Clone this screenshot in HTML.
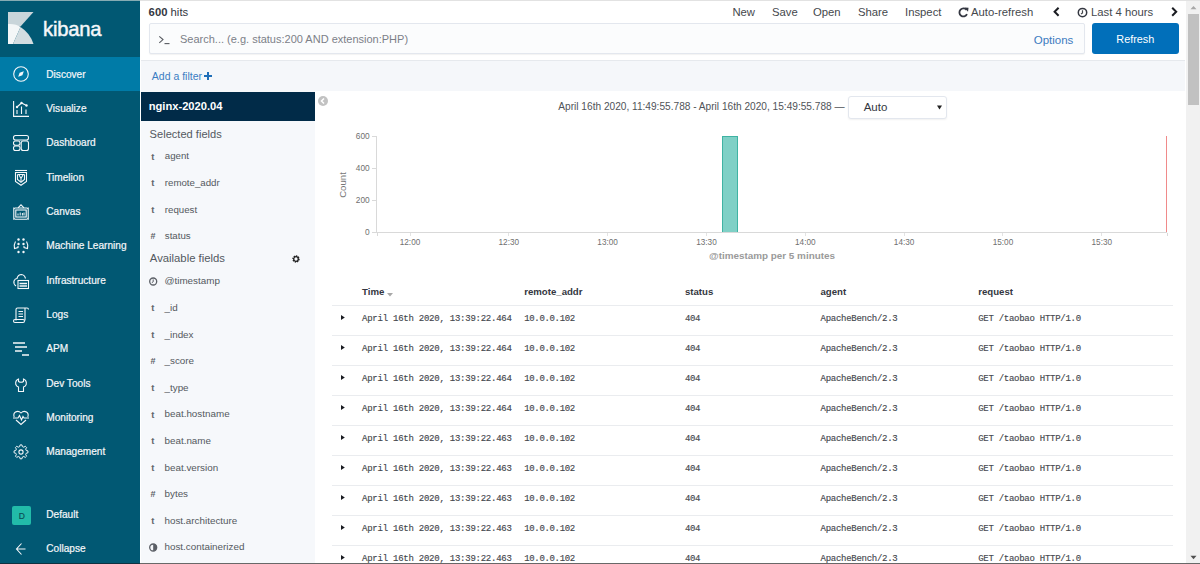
<!DOCTYPE html>
<html><head><meta charset="utf-8"><title>Discover - Kibana</title>
<style>
html,body{margin:0;padding:0;width:1200px;height:564px;overflow:hidden;background:#fff}
.r{position:absolute;display:block}
.t{position:absolute;white-space:nowrap;font-family:'Liberation Sans', sans-serif}
b{font-weight:700}
</style></head><body>
<div class="r" style="left:0px;top:0px;width:1200px;height:564px;background:#fff"></div>
<div class="r" style="left:0px;top:0px;width:1200px;height:1px;background:#e2e2e2"></div>
<div class="r" style="left:0px;top:0px;width:140px;height:1px;background:#86abb3"></div>
<div class="r" style="left:0px;top:1px;width:140px;height:562px;background:#015873"></div>
<div class="r" style="left:0px;top:57px;width:140px;height:34px;background:#007ba7"></div>
<svg class="r" style="left:8px;top:12px" width="26" height="33" viewBox="0 0 26 33">
<polygon points="0,0 25.5,0 12.5,14.5 0,14.5" fill="#c9d5da"/>
<path d="M0,12 Q8,11.5 12.5,15 L5,32 L0,32 Z" fill="#f4f7f8"/>
<path d="M12.5,15 Q22,21 25.5,32 L5,32 Z" fill="#d3dde1"/>
</svg>
<div class="t" style="left:43.00px;top:18.70px;font-size:20.2px;line-height:20.2px;color:#f5f7fa;font-weight:400;font-family:'Liberation Sans', sans-serif;letter-spacing:-0.2px;-webkit-text-stroke:0.45px #f5f7fa;">kibana</div>
<div class="t" style="left:46.30px;top:69.75px;font-size:10.1px;line-height:10.1px;color:#f5f7fa;font-weight:400;font-family:'Liberation Sans', sans-serif;-webkit-text-stroke:0.2px #f5f7fa;">Discover</div>
<svg class="r" style="left:13px;top:66px" width="16" height="16" viewBox="0 0 16 16" overflow="visible"><circle cx="8" cy="8" r="7.3" fill="none" stroke="#f5f7fa" stroke-width="1.1"/><path d="M10.8,5.2 L6.6,6.8 L5.2,10.8 L9.4,9.2 Z" fill="#f5f7fa"/></svg>
<div class="t" style="left:46.30px;top:104.09px;font-size:10.1px;line-height:10.1px;color:#f5f7fa;font-weight:400;font-family:'Liberation Sans', sans-serif;-webkit-text-stroke:0.2px #f5f7fa;">Visualize</div>
<svg class="r" style="left:13px;top:101px" width="16" height="16" viewBox="0 0 16 16" overflow="visible"><path d="M0.6,0 V15.4 H16" fill="none" stroke="#f5f7fa" stroke-width="1.1"/><path d="M4,6 L8.5,2 L13.5,4.5" fill="none" stroke="#f5f7fa" stroke-width="1.1"/><circle cx="4" cy="6" r="1.2" fill="#f5f7fa"/><circle cx="8.5" cy="2" r="1.2" fill="#f5f7fa"/><circle cx="13.5" cy="4.5" r="1.2" fill="#f5f7fa"/><path d="M4,9 V13 M8.5,5.5 V13 M13,8.5 V13" fill="none" stroke="#f5f7fa" stroke-width="1.1"/></svg>
<div class="t" style="left:46.30px;top:138.43px;font-size:10.1px;line-height:10.1px;color:#f5f7fa;font-weight:400;font-family:'Liberation Sans', sans-serif;-webkit-text-stroke:0.2px #f5f7fa;">Dashboard</div>
<svg class="r" style="left:13px;top:135px" width="16" height="16" viewBox="0 0 16 16" overflow="visible"><rect x="0.5" y="0.5" width="15" height="4.5" rx="2" fill="none" stroke="#f5f7fa" stroke-width="1.1"/><rect x="0.5" y="6" width="6.5" height="4.2" rx="2" fill="none" stroke="#f5f7fa" stroke-width="1.1"/><rect x="0.5" y="11" width="6.5" height="4.5" rx="2" fill="none" stroke="#f5f7fa" stroke-width="1.1"/><rect x="8.2" y="6" width="7.3" height="9.5" rx="2" fill="none" stroke="#f5f7fa" stroke-width="1.1"/></svg>
<div class="t" style="left:46.30px;top:172.77px;font-size:10.1px;line-height:10.1px;color:#f5f7fa;font-weight:400;font-family:'Liberation Sans', sans-serif;-webkit-text-stroke:0.2px #f5f7fa;">Timelion</div>
<svg class="r" style="left:13px;top:170px" width="16" height="16" viewBox="0 0 16 16" overflow="visible"><path d="M2,0.5 H14" fill="none" stroke="#f5f7fa" stroke-width="1.1"/><path d="M2.5,2.5 H13.5 V11.5 L8,15.3 L2.5,11.5 Z" fill="none" stroke="#f5f7fa" stroke-width="1.1"/><path d="M4.5,4.5 V9.5 L8,12.2 L11.5,9.5 V4.5 M4.5,4.5 H11.5" fill="none" stroke="#f5f7fa" stroke-width="1.1"/><path d="M6,5 L8,8.5 L10,5 M8,8.5 V11.5" fill="none" stroke="#f5f7fa" stroke-width="1.1"/></svg>
<div class="t" style="left:46.30px;top:207.11px;font-size:10.1px;line-height:10.1px;color:#f5f7fa;font-weight:400;font-family:'Liberation Sans', sans-serif;-webkit-text-stroke:0.2px #f5f7fa;">Canvas</div>
<svg class="r" style="left:13px;top:204px" width="16" height="16" viewBox="0 0 16 16" overflow="visible"><path d="M5,3.8 L8,0.8 L11,3.8" fill="none" stroke="#f5f7fa" stroke-width="1.1"/><path d="M0.8,4.2 Q1.5,4.6 2,4 H14 Q14.5,4.6 15.2,4.2 V15 Q14.5,14.5 14,15.2 H2 Q1.5,14.5 0.8,15 Z" fill="none" stroke="#f5f7fa" stroke-width="1.1"/><rect x="2.8" y="6" width="10.4" height="7" fill="none" stroke="#f5f7fa" stroke-width="1.1" stroke-width="1"/><path d="M5,9.5 V11.5 M7.2,8.5 V11.5 M9.4,9 V11.5 M11,8.5 V11.5" stroke="#f5f7fa" stroke-width="1"/></svg>
<div class="t" style="left:46.30px;top:241.45px;font-size:10.1px;line-height:10.1px;color:#f5f7fa;font-weight:400;font-family:'Liberation Sans', sans-serif;-webkit-text-stroke:0.2px #f5f7fa;">Machine Learning</div>
<svg class="r" style="left:13px;top:238px" width="16" height="16" viewBox="0 0 16 16" overflow="visible"><circle cx="5.5" cy="1.5" r="1.2" fill="#f5f7fa"/><circle cx="10.5" cy="1.5" r="1.2" fill="#f5f7fa"/><circle cx="5.5" cy="6" r="1.2" fill="#f5f7fa"/><circle cx="10.5" cy="6" r="1.2" fill="#f5f7fa"/><circle cx="5.5" cy="14" r="1.2" fill="#f5f7fa"/><circle cx="10.5" cy="14" r="1.2" fill="#f5f7fa"/><path d="M2.5,3.5 Q0.5,7 1.5,10.5 L5,9.5 V8 M13.5,3.5 Q15.5,7 14.5,10.5 L11,9.5 V8" fill="none" stroke="#f5f7fa" stroke-width="1.1"/></svg>
<div class="t" style="left:46.30px;top:275.79px;font-size:10.1px;line-height:10.1px;color:#f5f7fa;font-weight:400;font-family:'Liberation Sans', sans-serif;-webkit-text-stroke:0.2px #f5f7fa;">Infrastructure</div>
<svg class="r" style="left:13px;top:273px" width="16" height="16" viewBox="0 0 16 16" overflow="visible"><path d="M3,13 Q0.2,11 1,8 Q2,5.5 4,5.5 Q5,1.5 8.5,1.5 Q11.5,1.8 12.5,5.5" fill="none" stroke="#f5f7fa" stroke-width="1.1"/><rect x="5" y="7.5" width="10.5" height="8" fill="none" stroke="#f5f7fa" stroke-width="1.1"/><path d="M6.5,10.5 H14 M6.5,13 H14" stroke="#f5f7fa" stroke-width="1.4"/></svg>
<div class="t" style="left:46.30px;top:310.13px;font-size:10.1px;line-height:10.1px;color:#f5f7fa;font-weight:400;font-family:'Liberation Sans', sans-serif;-webkit-text-stroke:0.2px #f5f7fa;">Logs</div>
<svg class="r" style="left:13px;top:307px" width="16" height="16" viewBox="0 0 16 16" overflow="visible"><path d="M3,13.5 V2.5 Q3,1 4.5,1 H14 Q15.5,1 15.5,2.5 M12,13.5 V1.5" fill="none" stroke="#f5f7fa" stroke-width="1.1"/><path d="M5.5,4.5 H10 M5.5,7 H10 M5.5,9.5 H10" fill="none" stroke="#f5f7fa" stroke-width="1.1"/><rect x="0.5" y="12.5" width="11" height="3" rx="1.5" fill="none" stroke="#f5f7fa" stroke-width="1.1"/></svg>
<div class="t" style="left:46.30px;top:344.47px;font-size:10.1px;line-height:10.1px;color:#f5f7fa;font-weight:400;font-family:'Liberation Sans', sans-serif;-webkit-text-stroke:0.2px #f5f7fa;">APM</div>
<svg class="r" style="left:13px;top:341px" width="16" height="16" viewBox="0 0 16 16" overflow="visible"><path d="M0,2 H12 M2,6 H14 M2,10 H9 M9,14 H16" stroke="#f5f7fa" stroke-width="1.3"/></svg>
<div class="t" style="left:46.30px;top:378.81px;font-size:10.1px;line-height:10.1px;color:#f5f7fa;font-weight:400;font-family:'Liberation Sans', sans-serif;-webkit-text-stroke:0.2px #f5f7fa;">Dev Tools</div>
<svg class="r" style="left:13px;top:376px" width="16" height="16" viewBox="0 0 16 16" overflow="visible"><path d="M5.5,3 Q2,4.5 2.8,8.5 Q3.5,10.5 5.5,11 V15.5 H10.5 V11 Q12.5,10.5 13.2,8.5 Q14,4.5 10.5,3 V5.5 Q8,7 5.5,5.5 Z" fill="none" stroke="#f5f7fa" stroke-width="1.1"/></svg>
<div class="t" style="left:46.30px;top:413.15px;font-size:10.1px;line-height:10.1px;color:#f5f7fa;font-weight:400;font-family:'Liberation Sans', sans-serif;-webkit-text-stroke:0.2px #f5f7fa;">Monitoring</div>
<svg class="r" style="left:13px;top:410px" width="16" height="16" viewBox="0 0 16 16" overflow="visible"><path d="M3,10 L8,14.5 L13,10" fill="none" stroke="#f5f7fa" stroke-width="1.1"/><path d="M1.2,7 Q0,3.5 2.5,2 Q5.5,0.3 8,3 Q10.5,0.3 13.5,2 Q16,3.5 14.8,7" fill="none" stroke="#f5f7fa" stroke-width="1.1"/><path d="M0,8 H5 L6.5,5.5 L8.5,10 L10,6.5 L11,8 H16" fill="none" stroke="#f5f7fa" stroke-width="1.1"/></svg>
<div class="t" style="left:46.30px;top:447.49px;font-size:10.1px;line-height:10.1px;color:#f5f7fa;font-weight:400;font-family:'Liberation Sans', sans-serif;-webkit-text-stroke:0.2px #f5f7fa;">Management</div>
<svg class="r" style="left:13px;top:444px" width="16" height="16" viewBox="0 0 16 16" overflow="visible"><path d="M6.9,0.8 H9.1 L9.5,2.7 L11.2,3.4 L12.8,2.3 L14.3,3.8 L13.2,5.4 L13.9,7.1 L15.8,7.5 V9.7 L13.9,10.1 L13.2,11.8 L14.3,13.4 L12.8,14.9 L11.2,13.8 L9.5,14.5 L9.1,16.4 H6.9 L6.5,14.5 L4.8,13.8 L3.2,14.9 L1.7,13.4 L2.8,11.8 L2.1,10.1 L0.2,9.7 V7.5 L2.1,7.1 L2.8,5.4 L1.7,3.8 L3.2,2.3 L4.8,3.4 L6.5,2.7 Z" transform="translate(0.9,0.2) scale(0.89)" fill="none" stroke="#f5f7fa" stroke-width="1.1" stroke-width="1.2"/><circle cx="8" cy="8" r="2.1" fill="none" stroke="#f5f7fa" stroke-width="1.1"/></svg>
<div class="r" style="left:12px;top:506px;width:19px;height:19px;background:#22bba9;border-radius:2px"></div>
<div class="t" style="left:18.80px;top:512.00px;font-size:8.5px;line-height:8.5px;color:#0b4f55;font-weight:400;font-family:'Liberation Sans', sans-serif;-webkit-text-stroke:0.2px #0b4f55;">D</div>
<div class="t" style="left:46.30px;top:510.05px;font-size:10.1px;line-height:10.1px;color:#f5f7fa;font-weight:400;font-family:'Liberation Sans', sans-serif;-webkit-text-stroke:0.2px #f5f7fa;">Default</div>
<div class="t" style="left:46.30px;top:544.05px;font-size:10.1px;line-height:10.1px;color:#f5f7fa;font-weight:400;font-family:'Liberation Sans', sans-serif;-webkit-text-stroke:0.2px #f5f7fa;">Collapse</div>
<svg class="r" style="left:13px;top:540px" width="16" height="16" viewBox="0 0 16 16"><path d="M8.5,3.5 L3.5,9 L8.5,14.5 M3.5,9 H12.5" fill="none" stroke="#f5f7fa" stroke-width="1.1" stroke-width="1.3"/></svg>
<div class="t" style="left:148.60px;top:7.23px;font-size:11.3px;line-height:11.3px;color:#343741;font-weight:400;font-family:'Liberation Sans', sans-serif;"><b>600</b> hits</div>
<div class="t" style="left:732.40px;top:7.23px;font-size:11.3px;line-height:11.3px;color:#45484d;font-weight:400;font-family:'Liberation Sans', sans-serif;">New</div>
<div class="t" style="left:772.00px;top:7.23px;font-size:11.3px;line-height:11.3px;color:#45484d;font-weight:400;font-family:'Liberation Sans', sans-serif;">Save</div>
<div class="t" style="left:813.00px;top:7.23px;font-size:11.3px;line-height:11.3px;color:#45484d;font-weight:400;font-family:'Liberation Sans', sans-serif;">Open</div>
<div class="t" style="left:858.00px;top:7.23px;font-size:11.3px;line-height:11.3px;color:#45484d;font-weight:400;font-family:'Liberation Sans', sans-serif;">Share</div>
<div class="t" style="left:905.00px;top:7.23px;font-size:11.3px;line-height:11.3px;color:#45484d;font-weight:400;font-family:'Liberation Sans', sans-serif;">Inspect</div>
<div class="t" style="left:971.00px;top:7.23px;font-size:11.3px;line-height:11.3px;color:#45484d;font-weight:400;font-family:'Liberation Sans', sans-serif;">Auto-refresh</div>
<div class="t" style="left:1091.00px;top:7.23px;font-size:11.3px;line-height:11.3px;color:#45484d;font-weight:400;font-family:'Liberation Sans', sans-serif;">Last 4 hours</div>
<svg class="r" style="left:958px;top:7px" width="11" height="11" viewBox="0 0 11 11"><path d="M8.6,3 A4,4 0 1 0 9,7.2" fill="none" stroke="#343741" stroke-width="1.8"/><path d="M6.5,0.5 L10.5,0.8 L10,4.8 Z" fill="#343741"/></svg>
<svg class="r" style="left:1052px;top:7px" width="9" height="10" viewBox="0 0 9 10"><path d="M6.6,0.8 L2.6,4.8 L6.6,8.8" fill="none" stroke="#1a1c21" stroke-width="2"/></svg>
<svg class="r" style="left:1170px;top:7px" width="9" height="10" viewBox="0 0 9 10"><path d="M2.2,0.8 L6.2,4.8 L2.2,8.8" fill="none" stroke="#1a1c21" stroke-width="2"/></svg>
<svg class="r" style="left:1077px;top:7px" width="11" height="11" viewBox="0 0 11 11"><circle cx="5.5" cy="5.6" r="4.2" fill="none" stroke="#343741" stroke-width="1.5"/><path d="M5.5,3.2 V5.9 L4,6.9" fill="none" stroke="#45484d" stroke-width="1.2"/></svg>
<div class="r" style="left:149px;top:23px;width:934px;height:29px;background:#fbfcfd;border:1px solid #e3e7ee;border-radius:2px;box-shadow:0 1px 1px rgba(0,0,0,0.05)"></div>
<svg class="r" style="left:158px;top:35px" width="13" height="10" viewBox="0 0 13 10"><path d="M1.3,1.3 L5,4.6 L1.3,7.9" fill="none" stroke="#585b61" stroke-width="1.1"/><path d="M6.5,8.6 H11.5" stroke="#585b61" stroke-width="1.1"/></svg>
<div class="t" style="left:180.00px;top:33.69px;font-size:11px;line-height:11px;color:#7c8088;font-weight:400;font-family:'Liberation Sans', sans-serif;">Search... (e.g. status:200 AND extension:PHP)</div>
<div class="t" style="left:1033.70px;top:34.57px;font-size:11.5px;line-height:11.5px;color:#3b7bc0;font-weight:400;font-family:'Liberation Sans', sans-serif;">Options</div>
<div class="r" style="left:1092px;top:23px;width:87px;height:31px;background:#016fba;border-radius:3px"></div>
<div class="t" style="left:1116.30px;top:33.82px;font-size:10.85px;line-height:10.85px;color:#ffffff;font-weight:400;font-family:'Liberation Sans', sans-serif;">Refresh</div>
<div class="r" style="left:141px;top:60px;width:1044px;height:31px;background:#f5f7fa;border-top:1px solid #e6e9ed;box-sizing:border-box"></div>
<div class="t" style="left:151.80px;top:70.91px;font-size:10.5px;line-height:10.5px;color:#3b7dc2;font-weight:400;font-family:'Liberation Sans', sans-serif;">Add a filter</div>
<svg class="r" style="left:204px;top:72px" width="8" height="8" viewBox="0 0 8 8"><path d="M4,0 V8 M0,4 H8" stroke="#1f6fb8" stroke-width="2"/></svg>
<div class="r" style="left:141px;top:91px;width:174px;height:472px;background:#f6f8fb"></div>
<div class="r" style="left:140px;top:91px;width:1px;height:472px;background:#ffffff"></div>
<div class="r" style="left:141px;top:92px;width:174px;height:29px;background:#012b48"></div>
<div class="t" style="left:148.70px;top:100.75px;font-size:11.16px;line-height:11.16px;color:#ffffff;font-weight:700;font-family:'Liberation Sans', sans-serif;">nginx-2020.04</div>
<div class="t" style="left:149.60px;top:129.30px;font-size:11.1px;line-height:11.1px;color:#535860;font-weight:400;font-family:'Liberation Sans', sans-serif;">Selected fields</div>
<div class="t" style="left:149.80px;top:252.83px;font-size:11.3px;line-height:11.3px;color:#535860;font-weight:400;font-family:'Liberation Sans', sans-serif;">Available fields</div>
<svg class="r" style="left:292px;top:255px" width="8" height="8" viewBox="0 0 8 8"><circle cx="4" cy="4" r="2.9" fill="none" stroke="#222" stroke-width="1.6" stroke-dasharray="1.3 0.9"/><circle cx="4" cy="4" r="2.3" fill="none" stroke="#222" stroke-width="1.3"/></svg>
<div class="t" style="left:164.80px;top:151.49px;font-size:9.7px;line-height:9.7px;color:#54585e;font-weight:400;font-family:'Liberation Sans', sans-serif;">agent</div>
<div class="t" style="left:151.30px;top:151.66px;font-size:9.5px;line-height:9.5px;color:#63676d;font-weight:700;font-family:'Liberation Sans', sans-serif;">t</div>
<div class="t" style="left:164.80px;top:178.12px;font-size:9.7px;line-height:9.7px;color:#54585e;font-weight:400;font-family:'Liberation Sans', sans-serif;">remote_addr</div>
<div class="t" style="left:151.30px;top:178.29px;font-size:9.5px;line-height:9.5px;color:#63676d;font-weight:700;font-family:'Liberation Sans', sans-serif;">t</div>
<div class="t" style="left:164.80px;top:204.75px;font-size:9.7px;line-height:9.7px;color:#54585e;font-weight:400;font-family:'Liberation Sans', sans-serif;">request</div>
<div class="t" style="left:151.30px;top:204.92px;font-size:9.5px;line-height:9.5px;color:#63676d;font-weight:700;font-family:'Liberation Sans', sans-serif;">t</div>
<div class="t" style="left:164.80px;top:231.38px;font-size:9.7px;line-height:9.7px;color:#54585e;font-weight:400;font-family:'Liberation Sans', sans-serif;">status</div>
<div class="t" style="left:150.50px;top:231.97px;font-size:9px;line-height:9px;color:#5b5f66;font-weight:700;font-family:'Liberation Sans', sans-serif;">#</div>
<div class="t" style="left:164.50px;top:276.46px;font-size:9.85px;line-height:9.85px;color:#54585e;font-weight:400;font-family:'Liberation Sans', sans-serif;">@timestamp</div>
<svg class="r" style="left:149px;top:276.80px" width="9" height="9" viewBox="0 0 9 9"><circle cx="4.2" cy="4.5" r="3.5" fill="none" stroke="#5b5f66" stroke-width="1.3"/><path d="M4.2,2.4 V4.8 L2.8,5.7" fill="none" stroke="#5b5f66" stroke-width="1"/></svg>
<div class="t" style="left:164.50px;top:303.04px;font-size:9.85px;line-height:9.85px;color:#54585e;font-weight:400;font-family:'Liberation Sans', sans-serif;">_id</div>
<div class="t" style="left:151.30px;top:303.34px;font-size:9.5px;line-height:9.5px;color:#63676d;font-weight:700;font-family:'Liberation Sans', sans-serif;">t</div>
<div class="t" style="left:164.50px;top:329.62px;font-size:9.85px;line-height:9.85px;color:#54585e;font-weight:400;font-family:'Liberation Sans', sans-serif;">_index</div>
<div class="t" style="left:151.30px;top:329.92px;font-size:9.5px;line-height:9.5px;color:#63676d;font-weight:700;font-family:'Liberation Sans', sans-serif;">t</div>
<div class="t" style="left:164.50px;top:356.20px;font-size:9.85px;line-height:9.85px;color:#54585e;font-weight:400;font-family:'Liberation Sans', sans-serif;">_score</div>
<div class="t" style="left:150.50px;top:356.92px;font-size:9px;line-height:9px;color:#5b5f66;font-weight:700;font-family:'Liberation Sans', sans-serif;">#</div>
<div class="t" style="left:164.50px;top:382.78px;font-size:9.85px;line-height:9.85px;color:#54585e;font-weight:400;font-family:'Liberation Sans', sans-serif;">_type</div>
<div class="t" style="left:151.30px;top:383.08px;font-size:9.5px;line-height:9.5px;color:#63676d;font-weight:700;font-family:'Liberation Sans', sans-serif;">t</div>
<div class="t" style="left:164.50px;top:409.36px;font-size:9.85px;line-height:9.85px;color:#54585e;font-weight:400;font-family:'Liberation Sans', sans-serif;">beat.hostname</div>
<div class="t" style="left:151.30px;top:409.66px;font-size:9.5px;line-height:9.5px;color:#63676d;font-weight:700;font-family:'Liberation Sans', sans-serif;">t</div>
<div class="t" style="left:164.50px;top:435.94px;font-size:9.85px;line-height:9.85px;color:#54585e;font-weight:400;font-family:'Liberation Sans', sans-serif;">beat.name</div>
<div class="t" style="left:151.30px;top:436.24px;font-size:9.5px;line-height:9.5px;color:#63676d;font-weight:700;font-family:'Liberation Sans', sans-serif;">t</div>
<div class="t" style="left:164.50px;top:462.52px;font-size:9.85px;line-height:9.85px;color:#54585e;font-weight:400;font-family:'Liberation Sans', sans-serif;">beat.version</div>
<div class="t" style="left:151.30px;top:462.82px;font-size:9.5px;line-height:9.5px;color:#63676d;font-weight:700;font-family:'Liberation Sans', sans-serif;">t</div>
<div class="t" style="left:164.50px;top:489.10px;font-size:9.85px;line-height:9.85px;color:#54585e;font-weight:400;font-family:'Liberation Sans', sans-serif;">bytes</div>
<div class="t" style="left:150.50px;top:489.82px;font-size:9px;line-height:9px;color:#5b5f66;font-weight:700;font-family:'Liberation Sans', sans-serif;">#</div>
<div class="t" style="left:164.50px;top:515.68px;font-size:9.85px;line-height:9.85px;color:#54585e;font-weight:400;font-family:'Liberation Sans', sans-serif;">host.architecture</div>
<div class="t" style="left:151.30px;top:515.98px;font-size:9.5px;line-height:9.5px;color:#63676d;font-weight:700;font-family:'Liberation Sans', sans-serif;">t</div>
<div class="t" style="left:164.50px;top:542.26px;font-size:9.85px;line-height:9.85px;color:#54585e;font-weight:400;font-family:'Liberation Sans', sans-serif;">host.containerized</div>
<svg class="r" style="left:149px;top:542.60px" width="9" height="9" viewBox="0 0 9 9"><circle cx="4.2" cy="4.5" r="3.5" fill="none" stroke="#5b5f66" stroke-width="1.3"/><path d="M4.2,1 A3.5,3.5 0 0 1 4.2,8 Z" fill="#5b5f66"/></svg>
<svg class="r" style="left:318px;top:96px" width="10" height="10" viewBox="0 0 10 10"><circle cx="5" cy="5" r="5" fill="#c2c2c2"/><path d="M6,2.5 L3.5,5 L6,7.5" fill="none" stroke="#fff" stroke-width="1.5"/></svg>
<div class="t" style="left:558.30px;top:102.22px;font-size:10.13px;line-height:10.13px;color:#505358;font-weight:400;font-family:'Liberation Sans', sans-serif;">April 16th 2020, 11:49:55.788 - April 16th 2020, 15:49:55.788 —</div>
<div class="r" style="left:848px;top:96px;width:99px;height:23px;background:#fff;border:1px solid #e3e7ee;border-radius:3px;box-sizing:border-box;box-shadow:0 1px 2px rgba(0,0,0,0.06)"></div>
<div class="t" style="left:863.70px;top:101.99px;font-size:11.47px;line-height:11.47px;color:#343741;font-weight:400;font-family:'Liberation Sans', sans-serif;">Auto</div>
<svg class="r" style="left:937px;top:105px" width="5" height="5" viewBox="0 0 5 5"><path d="M0,0.5 H5 L2.5,4.5 Z" fill="#222"/></svg>
<div class="r" style="left:376px;top:136px;width:1px;height:97px;background:#d9d9d9"></div>
<div class="r" style="left:376px;top:232px;width:791px;height:1px;background:#d9d9d9"></div>
<div class="r" style="left:372px;top:136px;width:4px;height:1px;background:#d9d9d9"></div>
<div class="t" style="right:830.4px;top:131.97px;font-size:8.3px;line-height:8.3px;color:#6f6f6f;font-family:'Liberation Sans', sans-serif">600</div>
<div class="r" style="left:372px;top:168px;width:4px;height:1px;background:#d9d9d9"></div>
<div class="t" style="right:830.4px;top:163.97px;font-size:8.3px;line-height:8.3px;color:#6f6f6f;font-family:'Liberation Sans', sans-serif">400</div>
<div class="r" style="left:372px;top:200px;width:4px;height:1px;background:#d9d9d9"></div>
<div class="t" style="right:830.4px;top:195.97px;font-size:8.3px;line-height:8.3px;color:#6f6f6f;font-family:'Liberation Sans', sans-serif">200</div>
<div class="r" style="left:372px;top:232px;width:4px;height:1px;background:#d9d9d9"></div>
<div class="t" style="right:830.4px;top:227.97px;font-size:8.3px;line-height:8.3px;color:#6f6f6f;font-family:'Liberation Sans', sans-serif">0</div>
<div class="t" style="left:342.6px;top:184.5px;font-size:9.6px;line-height:10px;color:#777;font-family:'Liberation Sans', sans-serif;transform:translate(-50%,-50%) rotate(-90deg);transform-origin:50% 50%">Count</div>
<div class="r" style="left:410px;top:233px;width:1px;height:3px;background:#e3e3e3"></div>
<div class="t" style="left:390.00px;width:40px;text-align:center;top:239.23px;font-size:8.23px;line-height:8.23px;color:#6f6f6f;font-family:'Liberation Sans', sans-serif">12:00</div>
<div class="r" style="left:508px;top:233px;width:1px;height:3px;background:#e3e3e3"></div>
<div class="t" style="left:488.83px;width:40px;text-align:center;top:239.23px;font-size:8.23px;line-height:8.23px;color:#6f6f6f;font-family:'Liberation Sans', sans-serif">12:30</div>
<div class="r" style="left:607px;top:233px;width:1px;height:3px;background:#e3e3e3"></div>
<div class="t" style="left:587.66px;width:40px;text-align:center;top:239.23px;font-size:8.23px;line-height:8.23px;color:#6f6f6f;font-family:'Liberation Sans', sans-serif">13:00</div>
<div class="r" style="left:706px;top:233px;width:1px;height:3px;background:#e3e3e3"></div>
<div class="t" style="left:686.49px;width:40px;text-align:center;top:239.23px;font-size:8.23px;line-height:8.23px;color:#6f6f6f;font-family:'Liberation Sans', sans-serif">13:30</div>
<div class="r" style="left:805px;top:233px;width:1px;height:3px;background:#e3e3e3"></div>
<div class="t" style="left:785.32px;width:40px;text-align:center;top:239.23px;font-size:8.23px;line-height:8.23px;color:#6f6f6f;font-family:'Liberation Sans', sans-serif">14:00</div>
<div class="r" style="left:904px;top:233px;width:1px;height:3px;background:#e3e3e3"></div>
<div class="t" style="left:884.15px;width:40px;text-align:center;top:239.23px;font-size:8.23px;line-height:8.23px;color:#6f6f6f;font-family:'Liberation Sans', sans-serif">14:30</div>
<div class="r" style="left:1002px;top:233px;width:1px;height:3px;background:#e3e3e3"></div>
<div class="t" style="left:982.98px;width:40px;text-align:center;top:239.23px;font-size:8.23px;line-height:8.23px;color:#6f6f6f;font-family:'Liberation Sans', sans-serif">15:00</div>
<div class="r" style="left:1101px;top:233px;width:1px;height:3px;background:#e3e3e3"></div>
<div class="t" style="left:1081.81px;width:40px;text-align:center;top:239.23px;font-size:8.23px;line-height:8.23px;color:#6f6f6f;font-family:'Liberation Sans', sans-serif">15:30</div>
<div class="r" style="left:377px;top:233px;width:1px;height:3px;background:#d9d9d9"></div>
<div class="r" style="left:1167px;top:233px;width:1px;height:3px;background:#d9d9d9"></div>
<div class="r" style="left:722px;top:136px;width:16px;height:96px;background:#7fd0c6;border:1px solid #3fb3a3;box-sizing:border-box;border-bottom:none"></div>
<div class="r" style="left:1166px;top:136px;width:1px;height:96px;background:#f08a8a"></div>
<div class="t" style="left:709.00px;top:251.37px;font-size:9.9px;line-height:9.9px;color:#9a9a9a;font-weight:700;font-family:'Liberation Sans', sans-serif;">@timestamp per 5 minutes</div>
<div class="t" style="left:362.00px;top:287.33px;font-size:9.65px;line-height:9.65px;color:#343741;font-weight:700;font-family:'Liberation Sans', sans-serif;">Time</div>
<div class="t" style="left:524.20px;top:287.33px;font-size:9.65px;line-height:9.65px;color:#343741;font-weight:700;font-family:'Liberation Sans', sans-serif;">remote_addr</div>
<div class="t" style="left:684.90px;top:287.33px;font-size:9.65px;line-height:9.65px;color:#343741;font-weight:700;font-family:'Liberation Sans', sans-serif;">status</div>
<div class="t" style="left:820.50px;top:287.33px;font-size:9.65px;line-height:9.65px;color:#343741;font-weight:700;font-family:'Liberation Sans', sans-serif;">agent</div>
<div class="t" style="left:978.20px;top:287.33px;font-size:9.65px;line-height:9.65px;color:#343741;font-weight:700;font-family:'Liberation Sans', sans-serif;">request</div>
<svg class="r" style="left:387px;top:293px" width="6" height="4" viewBox="0 0 6 4"><path d="M0,0 H6 L3,3.5 Z" fill="#a8a8a8"/></svg>
<div class="r" style="left:332px;top:305px;width:841px;height:1px;background:#eaecef"></div>
<div class="r" style="left:332px;top:335px;width:841px;height:1px;background:#eaecef"></div>
<div class="r" style="left:332px;top:365px;width:841px;height:1px;background:#eaecef"></div>
<div class="r" style="left:332px;top:395px;width:841px;height:1px;background:#eaecef"></div>
<div class="r" style="left:332px;top:425px;width:841px;height:1px;background:#eaecef"></div>
<div class="r" style="left:332px;top:455px;width:841px;height:1px;background:#eaecef"></div>
<div class="r" style="left:332px;top:485px;width:841px;height:1px;background:#eaecef"></div>
<div class="r" style="left:332px;top:515px;width:841px;height:1px;background:#eaecef"></div>
<div class="r" style="left:332px;top:545px;width:841px;height:1px;background:#eaecef"></div>
<svg class="r" style="left:341px;top:315px;transform:translateY(0px)" width="4" height="5" viewBox="0 0 4 5"><path d="M0,0 L3.8,2.5 L0,5 Z" fill="#1a1c21"/></svg>
<div class="t" style="left:362.00px;top:314.61px;font-size:9px;line-height:9px;color:#45484e;font-weight:400;font-family:'Liberation Mono', monospace;-webkit-text-stroke:0.15px #45484e;letter-spacing:-0.24px;">April 16th 2020, 13:39:22.464</div>
<div class="t" style="left:524.20px;top:314.61px;font-size:9px;line-height:9px;color:#45484e;font-weight:400;font-family:'Liberation Mono', monospace;-webkit-text-stroke:0.15px #45484e;letter-spacing:-0.33px;">10.0.0.102</div>
<div class="t" style="left:684.90px;top:314.61px;font-size:9px;line-height:9px;color:#45484e;font-weight:400;font-family:'Liberation Mono', monospace;-webkit-text-stroke:0.15px #45484e;letter-spacing:-0.33px;">404</div>
<div class="t" style="left:820.50px;top:314.61px;font-size:9px;line-height:9px;color:#45484e;font-weight:400;font-family:'Liberation Mono', monospace;-webkit-text-stroke:0.15px #45484e;letter-spacing:-0.27px;">ApacheBench/2.3</div>
<div class="t" style="left:978.20px;top:314.61px;font-size:9px;line-height:9px;color:#45484e;font-weight:400;font-family:'Liberation Mono', monospace;-webkit-text-stroke:0.15px #45484e;letter-spacing:-0.27px;">GET /taobao HTTP/1.0</div>
<svg class="r" style="left:341px;top:315px;transform:translateY(30px)" width="4" height="5" viewBox="0 0 4 5"><path d="M0,0 L3.8,2.5 L0,5 Z" fill="#1a1c21"/></svg>
<div class="t" style="left:362.00px;top:344.61px;font-size:9px;line-height:9px;color:#45484e;font-weight:400;font-family:'Liberation Mono', monospace;-webkit-text-stroke:0.15px #45484e;letter-spacing:-0.24px;">April 16th 2020, 13:39:22.464</div>
<div class="t" style="left:524.20px;top:344.61px;font-size:9px;line-height:9px;color:#45484e;font-weight:400;font-family:'Liberation Mono', monospace;-webkit-text-stroke:0.15px #45484e;letter-spacing:-0.33px;">10.0.0.102</div>
<div class="t" style="left:684.90px;top:344.61px;font-size:9px;line-height:9px;color:#45484e;font-weight:400;font-family:'Liberation Mono', monospace;-webkit-text-stroke:0.15px #45484e;letter-spacing:-0.33px;">404</div>
<div class="t" style="left:820.50px;top:344.61px;font-size:9px;line-height:9px;color:#45484e;font-weight:400;font-family:'Liberation Mono', monospace;-webkit-text-stroke:0.15px #45484e;letter-spacing:-0.27px;">ApacheBench/2.3</div>
<div class="t" style="left:978.20px;top:344.61px;font-size:9px;line-height:9px;color:#45484e;font-weight:400;font-family:'Liberation Mono', monospace;-webkit-text-stroke:0.15px #45484e;letter-spacing:-0.27px;">GET /taobao HTTP/1.0</div>
<svg class="r" style="left:341px;top:315px;transform:translateY(60px)" width="4" height="5" viewBox="0 0 4 5"><path d="M0,0 L3.8,2.5 L0,5 Z" fill="#1a1c21"/></svg>
<div class="t" style="left:362.00px;top:374.61px;font-size:9px;line-height:9px;color:#45484e;font-weight:400;font-family:'Liberation Mono', monospace;-webkit-text-stroke:0.15px #45484e;letter-spacing:-0.24px;">April 16th 2020, 13:39:22.464</div>
<div class="t" style="left:524.20px;top:374.61px;font-size:9px;line-height:9px;color:#45484e;font-weight:400;font-family:'Liberation Mono', monospace;-webkit-text-stroke:0.15px #45484e;letter-spacing:-0.33px;">10.0.0.102</div>
<div class="t" style="left:684.90px;top:374.61px;font-size:9px;line-height:9px;color:#45484e;font-weight:400;font-family:'Liberation Mono', monospace;-webkit-text-stroke:0.15px #45484e;letter-spacing:-0.33px;">404</div>
<div class="t" style="left:820.50px;top:374.61px;font-size:9px;line-height:9px;color:#45484e;font-weight:400;font-family:'Liberation Mono', monospace;-webkit-text-stroke:0.15px #45484e;letter-spacing:-0.27px;">ApacheBench/2.3</div>
<div class="t" style="left:978.20px;top:374.61px;font-size:9px;line-height:9px;color:#45484e;font-weight:400;font-family:'Liberation Mono', monospace;-webkit-text-stroke:0.15px #45484e;letter-spacing:-0.27px;">GET /taobao HTTP/1.0</div>
<svg class="r" style="left:341px;top:315px;transform:translateY(90px)" width="4" height="5" viewBox="0 0 4 5"><path d="M0,0 L3.8,2.5 L0,5 Z" fill="#1a1c21"/></svg>
<div class="t" style="left:362.00px;top:404.61px;font-size:9px;line-height:9px;color:#45484e;font-weight:400;font-family:'Liberation Mono', monospace;-webkit-text-stroke:0.15px #45484e;letter-spacing:-0.24px;">April 16th 2020, 13:39:22.464</div>
<div class="t" style="left:524.20px;top:404.61px;font-size:9px;line-height:9px;color:#45484e;font-weight:400;font-family:'Liberation Mono', monospace;-webkit-text-stroke:0.15px #45484e;letter-spacing:-0.33px;">10.0.0.102</div>
<div class="t" style="left:684.90px;top:404.61px;font-size:9px;line-height:9px;color:#45484e;font-weight:400;font-family:'Liberation Mono', monospace;-webkit-text-stroke:0.15px #45484e;letter-spacing:-0.33px;">404</div>
<div class="t" style="left:820.50px;top:404.61px;font-size:9px;line-height:9px;color:#45484e;font-weight:400;font-family:'Liberation Mono', monospace;-webkit-text-stroke:0.15px #45484e;letter-spacing:-0.27px;">ApacheBench/2.3</div>
<div class="t" style="left:978.20px;top:404.61px;font-size:9px;line-height:9px;color:#45484e;font-weight:400;font-family:'Liberation Mono', monospace;-webkit-text-stroke:0.15px #45484e;letter-spacing:-0.27px;">GET /taobao HTTP/1.0</div>
<svg class="r" style="left:341px;top:315px;transform:translateY(120px)" width="4" height="5" viewBox="0 0 4 5"><path d="M0,0 L3.8,2.5 L0,5 Z" fill="#1a1c21"/></svg>
<div class="t" style="left:362.00px;top:434.61px;font-size:9px;line-height:9px;color:#45484e;font-weight:400;font-family:'Liberation Mono', monospace;-webkit-text-stroke:0.15px #45484e;letter-spacing:-0.24px;">April 16th 2020, 13:39:22.463</div>
<div class="t" style="left:524.20px;top:434.61px;font-size:9px;line-height:9px;color:#45484e;font-weight:400;font-family:'Liberation Mono', monospace;-webkit-text-stroke:0.15px #45484e;letter-spacing:-0.33px;">10.0.0.102</div>
<div class="t" style="left:684.90px;top:434.61px;font-size:9px;line-height:9px;color:#45484e;font-weight:400;font-family:'Liberation Mono', monospace;-webkit-text-stroke:0.15px #45484e;letter-spacing:-0.33px;">404</div>
<div class="t" style="left:820.50px;top:434.61px;font-size:9px;line-height:9px;color:#45484e;font-weight:400;font-family:'Liberation Mono', monospace;-webkit-text-stroke:0.15px #45484e;letter-spacing:-0.27px;">ApacheBench/2.3</div>
<div class="t" style="left:978.20px;top:434.61px;font-size:9px;line-height:9px;color:#45484e;font-weight:400;font-family:'Liberation Mono', monospace;-webkit-text-stroke:0.15px #45484e;letter-spacing:-0.27px;">GET /taobao HTTP/1.0</div>
<svg class="r" style="left:341px;top:315px;transform:translateY(150px)" width="4" height="5" viewBox="0 0 4 5"><path d="M0,0 L3.8,2.5 L0,5 Z" fill="#1a1c21"/></svg>
<div class="t" style="left:362.00px;top:464.61px;font-size:9px;line-height:9px;color:#45484e;font-weight:400;font-family:'Liberation Mono', monospace;-webkit-text-stroke:0.15px #45484e;letter-spacing:-0.24px;">April 16th 2020, 13:39:22.463</div>
<div class="t" style="left:524.20px;top:464.61px;font-size:9px;line-height:9px;color:#45484e;font-weight:400;font-family:'Liberation Mono', monospace;-webkit-text-stroke:0.15px #45484e;letter-spacing:-0.33px;">10.0.0.102</div>
<div class="t" style="left:684.90px;top:464.61px;font-size:9px;line-height:9px;color:#45484e;font-weight:400;font-family:'Liberation Mono', monospace;-webkit-text-stroke:0.15px #45484e;letter-spacing:-0.33px;">404</div>
<div class="t" style="left:820.50px;top:464.61px;font-size:9px;line-height:9px;color:#45484e;font-weight:400;font-family:'Liberation Mono', monospace;-webkit-text-stroke:0.15px #45484e;letter-spacing:-0.27px;">ApacheBench/2.3</div>
<div class="t" style="left:978.20px;top:464.61px;font-size:9px;line-height:9px;color:#45484e;font-weight:400;font-family:'Liberation Mono', monospace;-webkit-text-stroke:0.15px #45484e;letter-spacing:-0.27px;">GET /taobao HTTP/1.0</div>
<svg class="r" style="left:341px;top:315px;transform:translateY(180px)" width="4" height="5" viewBox="0 0 4 5"><path d="M0,0 L3.8,2.5 L0,5 Z" fill="#1a1c21"/></svg>
<div class="t" style="left:362.00px;top:494.61px;font-size:9px;line-height:9px;color:#45484e;font-weight:400;font-family:'Liberation Mono', monospace;-webkit-text-stroke:0.15px #45484e;letter-spacing:-0.24px;">April 16th 2020, 13:39:22.463</div>
<div class="t" style="left:524.20px;top:494.61px;font-size:9px;line-height:9px;color:#45484e;font-weight:400;font-family:'Liberation Mono', monospace;-webkit-text-stroke:0.15px #45484e;letter-spacing:-0.33px;">10.0.0.102</div>
<div class="t" style="left:684.90px;top:494.61px;font-size:9px;line-height:9px;color:#45484e;font-weight:400;font-family:'Liberation Mono', monospace;-webkit-text-stroke:0.15px #45484e;letter-spacing:-0.33px;">404</div>
<div class="t" style="left:820.50px;top:494.61px;font-size:9px;line-height:9px;color:#45484e;font-weight:400;font-family:'Liberation Mono', monospace;-webkit-text-stroke:0.15px #45484e;letter-spacing:-0.27px;">ApacheBench/2.3</div>
<div class="t" style="left:978.20px;top:494.61px;font-size:9px;line-height:9px;color:#45484e;font-weight:400;font-family:'Liberation Mono', monospace;-webkit-text-stroke:0.15px #45484e;letter-spacing:-0.27px;">GET /taobao HTTP/1.0</div>
<svg class="r" style="left:341px;top:315px;transform:translateY(210px)" width="4" height="5" viewBox="0 0 4 5"><path d="M0,0 L3.8,2.5 L0,5 Z" fill="#1a1c21"/></svg>
<div class="t" style="left:362.00px;top:524.61px;font-size:9px;line-height:9px;color:#45484e;font-weight:400;font-family:'Liberation Mono', monospace;-webkit-text-stroke:0.15px #45484e;letter-spacing:-0.24px;">April 16th 2020, 13:39:22.463</div>
<div class="t" style="left:524.20px;top:524.61px;font-size:9px;line-height:9px;color:#45484e;font-weight:400;font-family:'Liberation Mono', monospace;-webkit-text-stroke:0.15px #45484e;letter-spacing:-0.33px;">10.0.0.102</div>
<div class="t" style="left:684.90px;top:524.61px;font-size:9px;line-height:9px;color:#45484e;font-weight:400;font-family:'Liberation Mono', monospace;-webkit-text-stroke:0.15px #45484e;letter-spacing:-0.33px;">404</div>
<div class="t" style="left:820.50px;top:524.61px;font-size:9px;line-height:9px;color:#45484e;font-weight:400;font-family:'Liberation Mono', monospace;-webkit-text-stroke:0.15px #45484e;letter-spacing:-0.27px;">ApacheBench/2.3</div>
<div class="t" style="left:978.20px;top:524.61px;font-size:9px;line-height:9px;color:#45484e;font-weight:400;font-family:'Liberation Mono', monospace;-webkit-text-stroke:0.15px #45484e;letter-spacing:-0.27px;">GET /taobao HTTP/1.0</div>
<svg class="r" style="left:341px;top:315px;transform:translateY(240px)" width="4" height="5" viewBox="0 0 4 5"><path d="M0,0 L3.8,2.5 L0,5 Z" fill="#1a1c21"/></svg>
<div class="t" style="left:362.00px;top:554.61px;font-size:9px;line-height:9px;color:#45484e;font-weight:400;font-family:'Liberation Mono', monospace;-webkit-text-stroke:0.15px #45484e;letter-spacing:-0.24px;">April 16th 2020, 13:39:22.463</div>
<div class="t" style="left:524.20px;top:554.61px;font-size:9px;line-height:9px;color:#45484e;font-weight:400;font-family:'Liberation Mono', monospace;-webkit-text-stroke:0.15px #45484e;letter-spacing:-0.33px;">10.0.0.102</div>
<div class="t" style="left:684.90px;top:554.61px;font-size:9px;line-height:9px;color:#45484e;font-weight:400;font-family:'Liberation Mono', monospace;-webkit-text-stroke:0.15px #45484e;letter-spacing:-0.33px;">404</div>
<div class="t" style="left:820.50px;top:554.61px;font-size:9px;line-height:9px;color:#45484e;font-weight:400;font-family:'Liberation Mono', monospace;-webkit-text-stroke:0.15px #45484e;letter-spacing:-0.27px;">ApacheBench/2.3</div>
<div class="t" style="left:978.20px;top:554.61px;font-size:9px;line-height:9px;color:#45484e;font-weight:400;font-family:'Liberation Mono', monospace;-webkit-text-stroke:0.15px #45484e;letter-spacing:-0.27px;">GET /taobao HTTP/1.0</div>
<div class="r" style="left:1186px;top:1px;width:14px;height:562px;background:#f1f1f1"></div>
<div class="r" style="left:1188px;top:14px;width:11px;height:91px;background:#c1c1c1"></div>
<svg class="r" style="left:1190px;top:5px" width="7" height="5" viewBox="0 0 7 5"><path d="M0.5,4.2 H6.5 L3.5,1 Z" fill="#a8a8a8"/></svg>
<svg class="r" style="left:1190px;top:555px" width="7" height="5" viewBox="0 0 7 5"><path d="M0.5,0.8 H6.5 L3.5,4.2 Z" fill="#505050"/></svg>
<div class="r" style="left:0px;top:563px;width:1200px;height:1px;background:#686868"></div>
<div class="r" style="left:0px;top:563px;width:140px;height:1px;background:#0f3140"></div>
</body></html>
